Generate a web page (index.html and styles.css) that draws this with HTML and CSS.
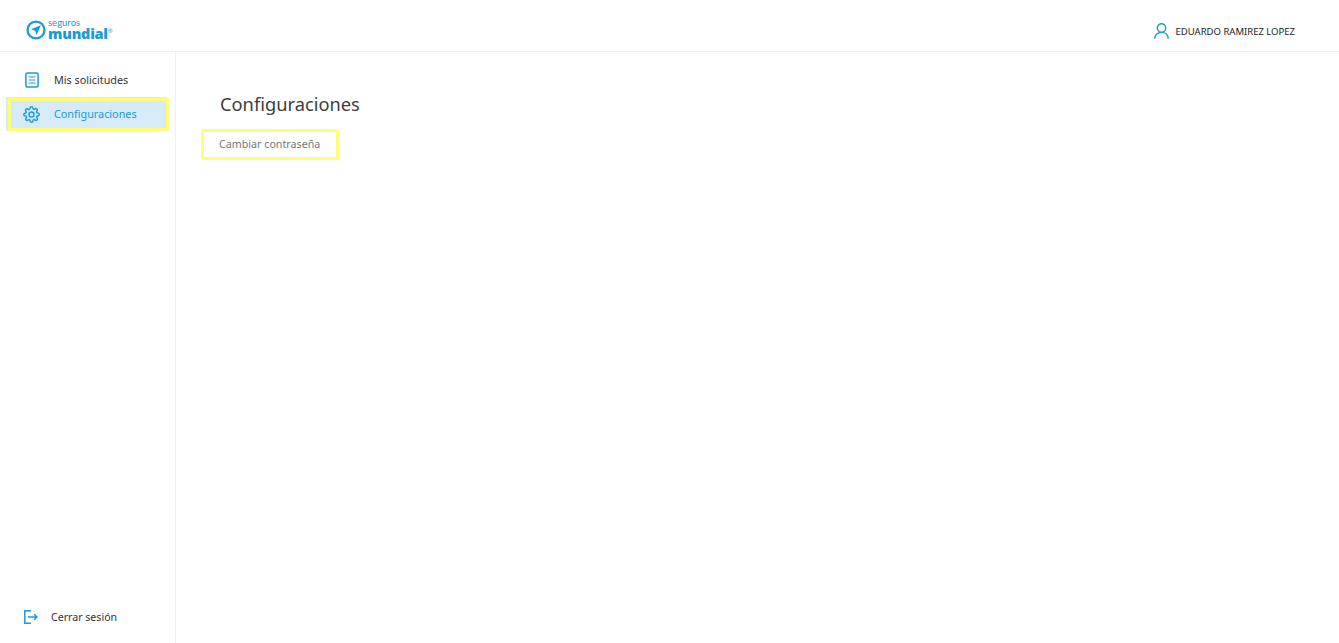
FILE: index.html
```html
<!DOCTYPE html>
<html lang="es">
<head>
  <meta charset="UTF-8">
  <meta name="viewport" content="width=device-width, initial-scale=1.0">
  <title>Configuraciones</title>
  <link rel="stylesheet" href="styles.css">
</head>
<body>

  <header class="topbar">
    <a class="logo" href="#">
      <svg class="logo-mark" width="20" height="20" viewBox="0 0 21 21">
        <circle cx="10.5" cy="10.5" r="8.9" fill="none" stroke="#1a9ad6" stroke-width="2.4"/>
        <path d="M15.6 5.6 L5.2 9.8 L9.6 11.4 L11.2 15.8 Z" fill="#1a9ad6"/>
      </svg>
      <span class="logo-text">
        <span class="logo-small">seguros</span>
        <span class="logo-big">mundial<sup>®</sup></span>
      </span>
    </a>
    <div class="user">
      <svg width="15" height="16" viewBox="0 0 15 16" fill="none" stroke="#1a9ad6" stroke-width="1.4">
        <circle cx="7.5" cy="5" r="4.2"/>
        <path d="M0.8 15.8 C0.8 11.8 3.6 9.4 7.5 9.4 C11.4 9.4 14.2 11.8 14.2 15.8"/>
      </svg>
      <span>EDUARDO RAMIREZ LOPEZ</span>
    </div>
  </header>

  <div class="layout">
    <nav class="sidebar">
      <div class="menu">
        <a class="menu-item" href="#">
          <span class="menu-icon">
            <svg width="14" height="16" viewBox="0 0 14 16" fill="none" stroke="#1a9ad6" stroke-width="1.5">
              <rect x="0.9" y="0.9" width="12.2" height="14.2" rx="1.5"/>
              <path d="M3.6 5 H10.4 M3.6 8 H10.4 M3.6 11 H10.4" stroke-width="1.2"/>
            </svg>
          </span>
          <span class="menu-label">Mis solicitudes</span>
        </a>
        <a class="menu-item active" href="#">
          <span class="menu-icon">
            <svg width="17" height="17" viewBox="0 0 24 24" fill="none" stroke="#1a9ad6" stroke-width="2" stroke-linejoin="round">
              <circle cx="12" cy="12" r="3.6"/>
              <path d="M19.4 15a1.65 1.65 0 0 0 .33 1.82l.06.06a2 2 0 1 1-2.83 2.83l-.06-.06a1.65 1.65 0 0 0-2.82 1.17V21a2 2 0 0 1-4 0v-.09a1.65 1.65 0 0 0-2.82-1.12l-.06.06a2 2 0 1 1-2.83-2.83l.06-.06a1.65 1.65 0 0 0-1.17-2.82H3a2 2 0 0 1 0-4h.09a1.65 1.65 0 0 0 1.12-2.82l-.06-.06a2 2 0 1 1 2.83-2.83l.06.06a1.65 1.65 0 0 0 1.82.33H9a1.65 1.65 0 0 0 1-1.51V3a2 2 0 0 1 4 0v.09a1.65 1.65 0 0 0 2.82 1.12l.06-.06a2 2 0 1 1 2.83 2.83l-.06.06a1.65 1.65 0 0 0-.33 1.82V9a1.65 1.65 0 0 0 1.51 1H21a2 2 0 0 1 0 4h-.09a1.65 1.65 0 0 0-1.51 1z"/>
            </svg>
          </span>
          <span class="menu-label">Configuraciones</span>
        </a>
      </div>
      <a class="logout" href="#">
        <svg width="14" height="14" viewBox="0 0 14 14" fill="none" stroke="#1a9ad6" stroke-width="1.5">
          <path d="M7 0.8 H0.8 V13.2 H7"/>
          <path d="M4 7 H13 M10.2 4.2 L13 7 L10.2 9.8"/>
        </svg>
        <span>Cerrar sesión</span>
      </a>
    </nav>

    <main class="content">
      <h1>Configuraciones</h1>
      <a class="option" href="#">Cambiar contraseña</a>
    </main>
  </div>

</body>
</html>
```

FILE: styles.css
```css
body {
  margin: 0;
  height: 643px;
  overflow: hidden;
  background: #fff;
  font-family: 'Noto Sans', sans-serif;
  color: #3d3d3d;
}
a {
  text-decoration: none;
  color: inherit;
}
.topbar {
  height: 51px;
  box-sizing: content-box;
  border-bottom: 1px solid #f0f0f0;
  display: flex;
  align-items: center;
  justify-content: space-between;
  padding: 0 44px 0 26px;
}
.logo {
  display: flex;
  align-items: center;
  gap: 2px;
  margin-top: 9px;
  color: #1a9ad6;
}
.logo-text {
  display: flex;
  flex-direction: column;
}
.logo-small {
  font-size: 9.5px;
  font-family: 'Lato', sans-serif;
  height: 8px;
  line-height: 8px;
}
.logo-big {
  font-size: 14.4px;
  font-weight: 800;
  font-family: 'Open Sans', sans-serif;
  letter-spacing: -0.2px;
  height: 14px;
  line-height: 14px;
}
.logo-big sup {
  font-size: 6px;
  font-weight: 400;
  vertical-align: 6px;
  line-height: 0;
}
.user {
  display: flex;
  align-items: center;
  gap: 7px;
  margin-top: 11px;
  font-size: 9.5px;
  color: #222;
}
.layout {
  display: flex;
  height: 591px;
}
.sidebar {
  width: 175px;
  border-right: 1px solid #f0f0f0;
  display: flex;
  flex-direction: column;
  justify-content: space-between;
  flex-shrink: 0;
}
.menu {
  padding: 11px 0 0 6px;
}
.menu-item {
  position: relative;
  display: flex;
  align-items: center;
  width: 161px;
  height: 34px;
  box-sizing: border-box;
  padding-left: 17px;
  font-size: 10.8px;
  color: #333;
}
.menu-icon {
  display: flex;
  justify-content: center;
  width: 17px;
  margin-right: 14px;
}
.menu-label {
  margin-bottom: 2px;
}
.menu-item.active {
  background: #d6ebf7;
  color: #1a9ad6;
}
/* marker drawn over the active row */
.menu-item.active::after {
  content: "";
  position: absolute;
  left: 2px;
  top: 1px;
  width: 155px;
  height: 27px;
  border: 3px solid #fdfd7a;
  border-radius: 1px;
}
.logout {
  display: flex;
  align-items: center;
  gap: 13px;
  padding: 0 0 19px 24px;
  font-size: 10.6px;
  color: #333;
}
.content {
  flex: 1;
  padding: 39px 0 0 44px;
}
.content h1 {
  margin: 0;
  font-size: 18.3px;
  font-weight: 400;
  line-height: 26px;
  color: #3d3d3d;
}
.option {
  display: block;
  width: 138px;
  height: 31px;
  box-sizing: border-box;
  margin: 12px 0 0 -19px;
  padding-left: 15px;
  border: 3px solid #fdfd7a;
  border-radius: 2px;
  font-size: 10.7px;
  line-height: 24px;
  color: #777;
}
```
